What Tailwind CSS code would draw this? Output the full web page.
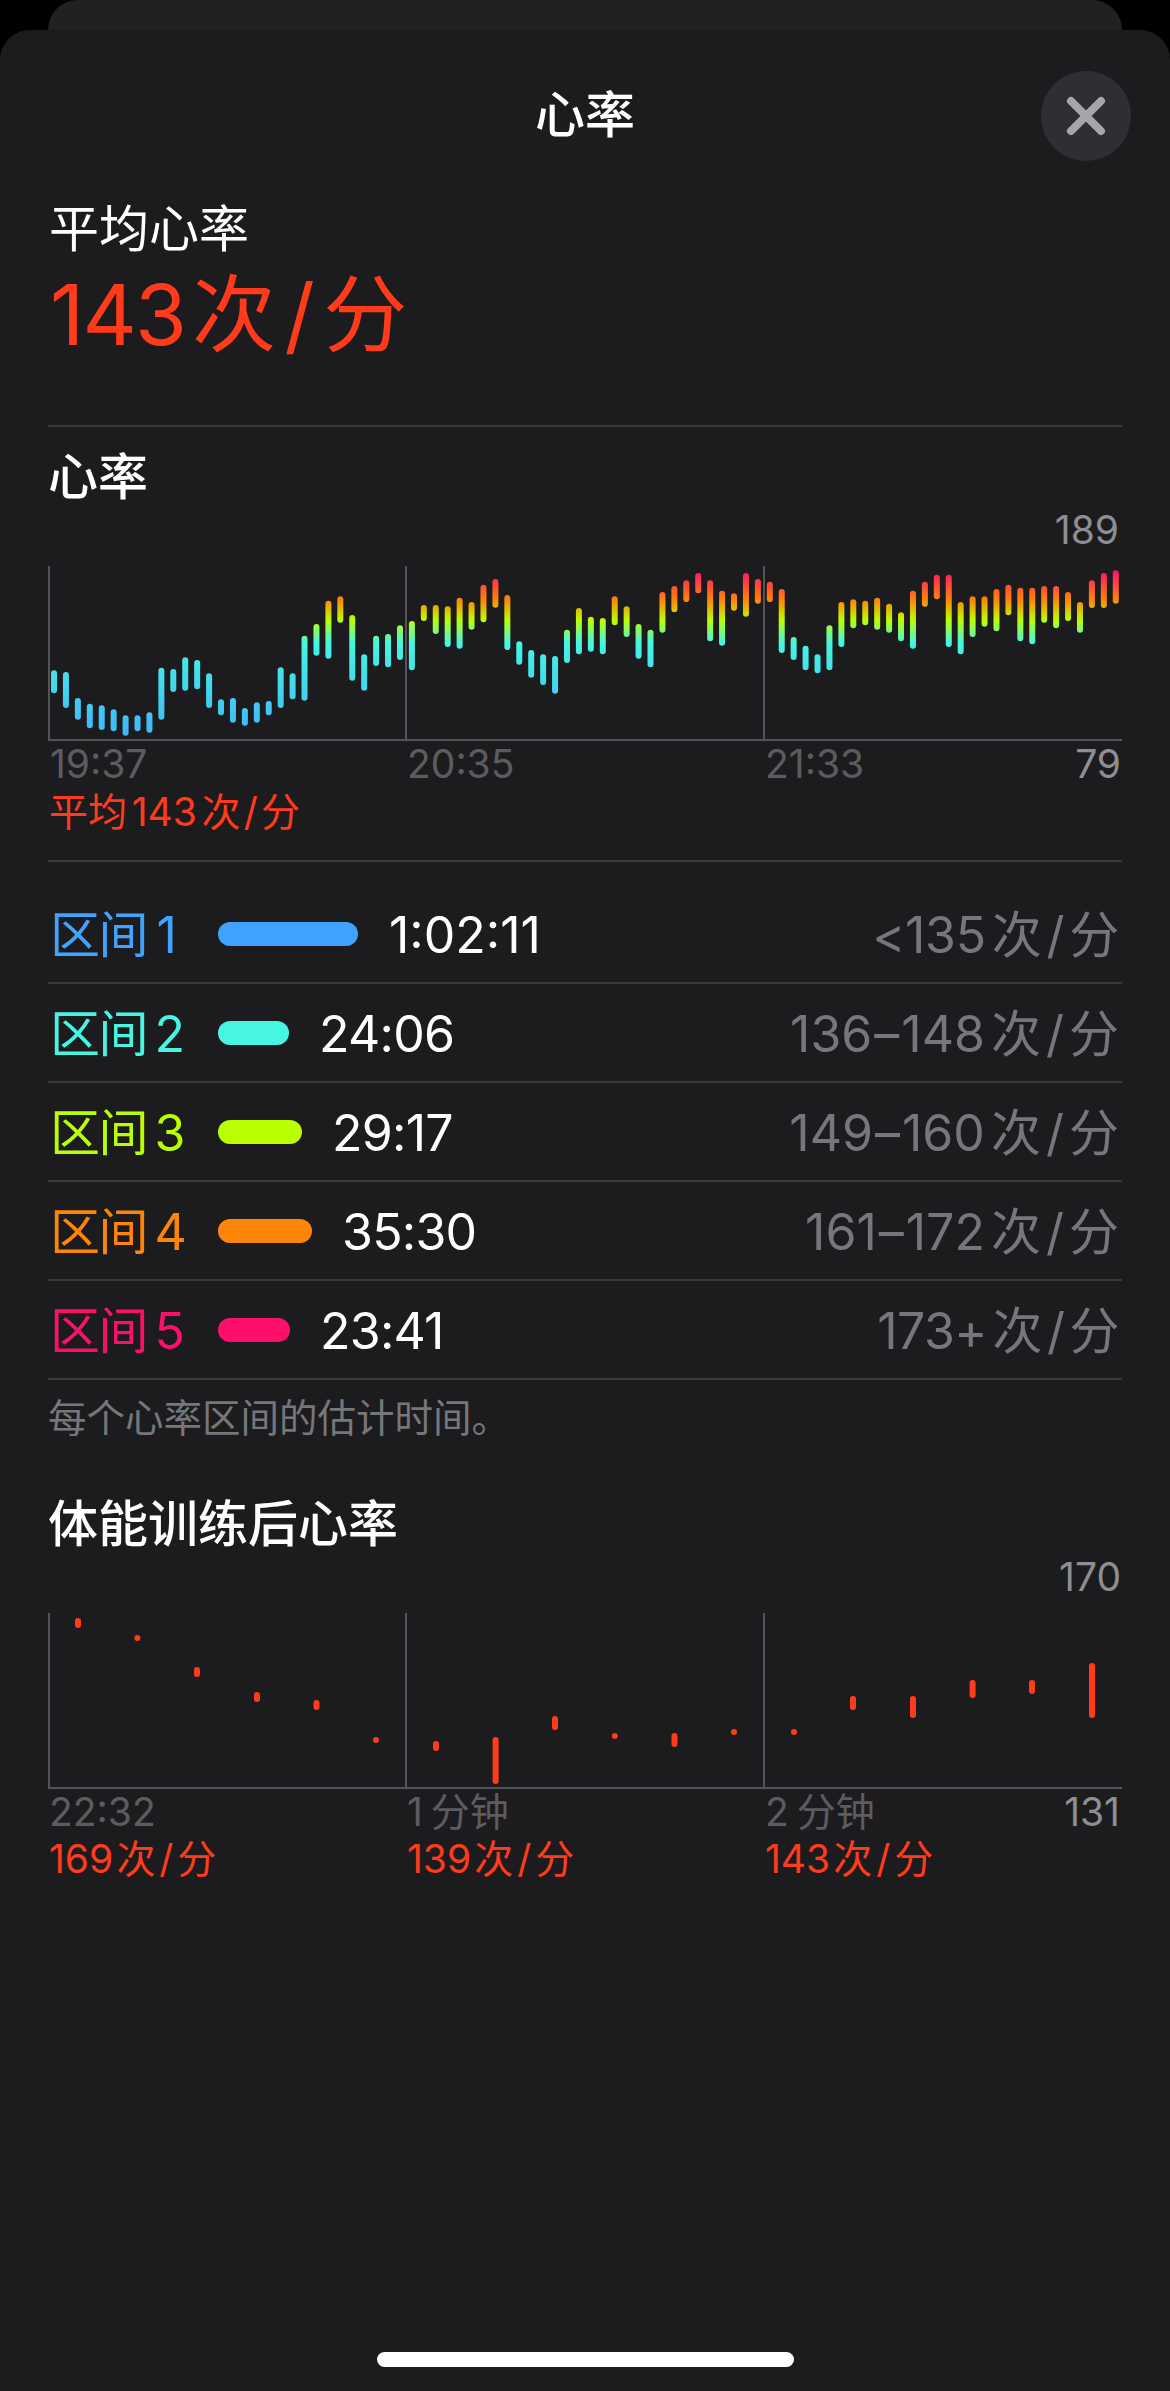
<!DOCTYPE html>
<html lang="en">
<head>
  <meta charset="UTF-8" />
  <title>心率</title>
  <script src="https://cdn.jsdelivr.net/npm/@tailwindcss/browser@4"></script>
</head>
<body class="bg-black font-['Inter','Noto_Sans_CJK_SC',sans-serif] text-white">
  <div class="relative w-[1170px] h-[2391px] overflow-hidden">
    <div class="h-[30px] mx-[48px] rounded-t-[30px] bg-[#212123]"></div>
    <div class="relative h-[2361px] rounded-t-[30px] bg-[#1c1c1e] px-[48px]">

      <div class="pt-[56px] text-center text-[50px] leading-[58px] font-medium">心率</div>
      <button class="absolute top-[41px] right-[39px] w-[90px] h-[90px] rounded-full bg-[#2f2f33] flex items-center justify-center">
        <svg width="40" height="40" viewBox="0 0 40 40"><path d="M5 5 L35 35 M35 5 L5 35" stroke="#a5a5ab" stroke-width="8" stroke-linecap="round" /></svg>
      </button>

      <div class="mt-[55px] text-[50px] leading-[60px] pl-[1px]">平均心率</div>
      <div class="mt-[6px] text-[84px] leading-[100px] text-[#ff3b1c] pl-[2px] [word-spacing:-0.2em]"><span class="tracking-[-0.02em]">143</span> 次<span class="mx-[0.1em]">/</span>分</div>
      <div class="mt-[60px] h-[2px] bg-[#39393c]"></div>

      <div class="mt-[20px] text-[50px] leading-[60px] font-medium">心率</div>
      <div class="text-right text-[39px] leading-[46px] text-[#8e8e93] pr-[3px]">189</div>
      <svg id="hrChart" class="block mt-[11px]" width="1074" height="177" viewBox="48 564 1074 177"></svg>
      <div class="grid grid-cols-3 text-[39px] leading-[46px] text-[#5c5c60]">
        <div class="pl-[2px]">19:37</div>
        <div class="pl-[1px]">20:35</div>
        <div class="pl-[1px] pr-[1px] flex justify-between"><span>21:33</span><span class="text-[#8e8e93]">79</span></div>
      </div>
      <div class="mt-[2px] text-[39px] leading-[46px] text-[#ff3b1c] pl-[1px] [word-spacing:-0.16em]">平均 143 次<span class="mx-[0.08em]">/</span>分</div>
      <div class="mt-[25px] h-[2px] bg-[#39393c]"></div>

      <div class="mt-[24px] text-[50px] [word-spacing:-0.16em]">
        <div class="flex items-center h-[98px] border-b-2 border-[#39393c]">
          <span class="w-[170px] pl-[2px] pt-[3px] tracking-[-0.03em] [word-spacing:-0.06em] text-[#3fa4ff]">区间 1</span>
          <span class="w-[140px] h-[24px] rounded-[12px] bg-[#3fa4ff]"></span>
          <span class="ml-[31px] pt-[3px]">1:02:11</span>
          <span class="ml-auto pr-[3px] pt-[3px] tracking-[-0.005em] text-[#77777b]">&lt;135 次<span class="mx-[0.1em]">/</span>分</span>
        </div>
        <div class="flex items-center h-[99px] border-b-2 border-[#39393c]">
          <span class="w-[170px] pl-[2px] pt-[3px] tracking-[-0.03em] [word-spacing:-0.1em] text-[#46f5e2]">区间 2</span>
          <span class="w-[71px] h-[24px] rounded-[12px] bg-[#46f5e2]"></span>
          <span class="ml-[30px] pt-[3px] tracking-[-0.015em]">24:06</span>
          <span class="ml-auto pr-[3px] pt-[3px] text-[#77777b]">136<span class="mx-[2px]">–</span>148 次<span class="mx-[0.1em]">/</span>分</span>
        </div>
        <div class="flex items-center h-[99px] border-b-2 border-[#39393c]">
          <span class="w-[170px] pl-[2px] pt-[3px] tracking-[-0.03em] [word-spacing:-0.1em] text-[#baff00]">区间 3</span>
          <span class="w-[84px] h-[24px] rounded-[12px] bg-[#baff00]"></span>
          <span class="ml-[30px] pt-[3px] tracking-[-0.015em]">29:17</span>
          <span class="ml-auto pr-[3px] pt-[3px] text-[#77777b]">149<span class="mx-[2px]">–</span>160 次<span class="mx-[0.1em]">/</span>分</span>
        </div>
        <div class="flex items-center h-[99px] border-b-2 border-[#39393c]">
          <span class="w-[170px] pl-[2px] pt-[3px] tracking-[-0.03em] [word-spacing:-0.1em] text-[#ff8508]">区间 4</span>
          <span class="w-[94px] h-[24px] rounded-[12px] bg-[#ff8508]"></span>
          <span class="ml-[30px] pt-[3px] tracking-[-0.015em]">35:30</span>
          <span class="ml-auto pr-[3px] pt-[3px] text-[#77777b]">161<span class="mx-[2px]">–</span>172 次<span class="mx-[0.1em]">/</span>分</span>
        </div>
        <div class="flex items-center h-[99px] border-b-2 border-[#39393c]">
          <span class="w-[170px] pl-[2px] pt-[3px] tracking-[-0.03em] [word-spacing:-0.1em] text-[#ff0f6c]">区间 5</span>
          <span class="w-[72px] h-[24px] rounded-[12px] bg-[#ff0f6c]"></span>
          <span class="ml-[30px] pt-[3px] tracking-[-0.015em]">23:41</span>
          <span class="ml-auto pr-[3px] pt-[3px] tracking-[-0.01em] text-[#77777b]">173+ 次<span class="mx-[0.1em]">/</span>分</span>
        </div>
      </div>
      <div class="mt-[15px] text-[38.5px] leading-[46px] text-[#77777b]">每个心率区间的估计时间。</div>

      <div class="mt-[53px] text-[50px] leading-[60px] font-medium">体能训练后心率</div>
      <div class="text-right text-[39px] leading-[46px] text-[#8e8e93] pr-[1px]">170</div>
      <svg id="recoveryChart" class="block mt-[11px]" width="1074" height="178" viewBox="48 1610 1074 178"></svg>
      <div class="grid grid-cols-3 text-[39px] leading-[46px] text-[#5c5c60] [word-spacing:-0.08em]">
        <div class="pl-[1px]">22:32</div>
        <div class="pl-[1px]">1 分钟</div>
        <div class="pl-[1px] pr-[2px] flex justify-between"><span>2 分钟</span><span class="text-[#8e8e93]">131</span></div>
      </div>
      <div class="mt-[1px] grid grid-cols-3 text-[39px] leading-[46px] text-[#ff3b1c] [word-spacing:-0.2em]">
        <div class="pl-[1px]">169 次<span class="mx-[0.1em]">/</span>分</div>
        <div class="pl-[1px]">139 次<span class="mx-[0.1em]">/</span>分</div>
        <div class="pl-[1px]">143 次<span class="mx-[0.1em]">/</span>分</div>
      </div>

      <div class="absolute left-[377px] bottom-[24px] w-[417px] h-[15px] rounded-full bg-white"></div>
    </div>
  </div>

  <script>
    // bar ends as read off the chart, in 3x crop units (page y = 500 + v / 3)
    const hrTops = [511,516,594,611,616,628,646,646,637,503,507,472,480,520,598,594,624,607,603,502,520,407,372,302,289,345,463,407,402,376,
      363,315,315,319,293,306,254,237,285,424,450,463,468,389,324,350,354,289,319,372,389,276,258,241,219,241,272,280,219,237,245,267,
      411,437,463,376,306,298,302,293,311,337,272,245,224,224,306,289,289,267,254,263,263,258,258,276,306,241,219,211];
    const hrBottoms = [580,624,659,685,690,694,707,694,698,659,576,572,568,624,646,668,677,668,646,624,598,602,467,476,368,542,572,498,502,480,
      511,363,402,441,446,389,367,323,450,494,533,555,581,489,463,455,463,376,411,476,502,398,337,306,280,424,437,332,350,311,306,459,
      480,511,520,511,441,385,376,389,398,424,446,320,298,441,463,411,380,394,346,424,433,368,385,363,398,324,324,311];

    // [x, top, bottom] in page pixels
    const recovery = [[78,1617,1627],[137.4,1634,1640],[197,1666,1676],[257,1691,1701],[316.5,1699,1709],[376,1736,1742],
      [436,1740,1750],[495.6,1736,1783],[555,1715,1729],[614.8,1732,1738],[674.5,1732,1746],[734,1728,1734],
      [794,1728,1734],[853,1695,1709],[913,1695,1717],[972.6,1679,1697],[1032,1679,1693],[1092,1662,1717]];

    function axes(top, bottom) {
      let s = "";
      [49, 406, 764].forEach(x => {
        s += `<rect x="${x - 1}" y="${top}" width="2" height="${bottom - top}" fill="#545458" />`;
      });
      s += `<rect x="48" y="${bottom - 1}" width="1074" height="2" fill="#545458" />`;
      return s;
    }

    function bar(x, top, bottom, fill) {
      return `<rect x="${x - 3}" y="${top}" width="6" height="${bottom - top}" rx="3" fill="${fill}" />`;
    }

    let hr = `<defs><linearGradient id="zones" gradientUnits="userSpaceOnUse" x1="0" y1="570" x2="0" y2="760">
      <stop offset="0" stop-color="#ff0f6c" />
      <stop offset="0.158" stop-color="#ff8508" />
      <stop offset="0.263" stop-color="#baff00" />
      <stop offset="0.384" stop-color="#46f5e2" />
      <stop offset="1" stop-color="#3fa4ff" />
    </linearGradient></defs>` + axes(566, 740);
    hrTops.forEach((t, i) => {
      hr += bar(54 + i * 11.93, 500 + t / 3, 500 + hrBottoms[i] / 3, "url(#zones)");
    });
    document.getElementById("hrChart").innerHTML = hr;

    let rec = axes(1612, 1787);
    recovery.forEach(r => { rec += bar(r[0], r[1], r[2], "#ff3b1c"); });
    document.getElementById("recoveryChart").innerHTML = rec;
  </script>
</body>
</html>
